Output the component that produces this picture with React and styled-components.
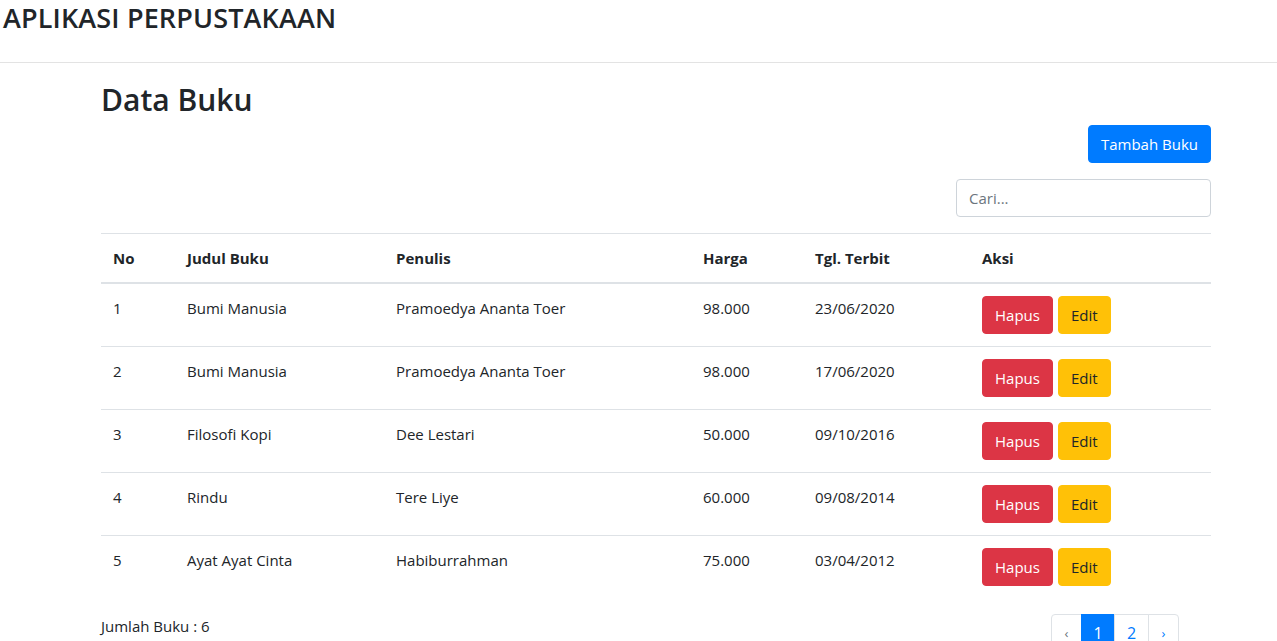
import React from 'react';
import styled, { createGlobalStyle } from 'styled-components';

const GlobalStyle = createGlobalStyle`
  * { box-sizing: border-box; }
  body {
    margin: 0;
    font-family: "Open Sans", "Noto Sans", sans-serif;
    font-size: 15px;
    color: #212529;
    background: #fff;
  }
`;

const Header = styled.div`
  height: 63px;
  border-bottom: 1px solid #e3e3e3;
  padding: 0 3px;
`;

const AppTitle = styled.h1`
  margin: 0;
  font-size: 27px;
  font-weight: 600;
  line-height: 36px;
  letter-spacing: 0.15px;
`;

const Container = styled.div`
  width: 1110px;
  margin-left: 101px;
`;

const PageTitle = styled.h2`
  margin: 18px 0 0 0;
  font-size: 30px;
  font-weight: 600;
  line-height: 38px;
`;

const Toolbar = styled.div`
  display: flex;
  flex-direction: column;
  align-items: flex-end;
  gap: 16px;
  margin-top: 6px;
`;

const Button = styled.button`
  font-family: inherit;
  font-size: 15px;
  line-height: 24px;
  height: 38px;
  padding: 6px 12px;
  border: 1px solid ${p => p.bg};
  border-radius: 4px;
  background: ${p => p.bg};
  color: ${p => p.fg};
  cursor: pointer;
`;

const SearchInput = styled.input`
  width: 255px;
  height: 38px;
  padding: 6px 12px;
  font-family: inherit;
  font-size: 15px;
  border: 1px solid #ced4da;
  border-radius: 4px;
  color: #495057;
  &::placeholder { color: #6c757d; }
`;

const Table = styled.table`
  width: 100%;
  margin-top: 16px;
  border-collapse: collapse;
`;

const Th = styled.th`
  text-align: left;
  font-weight: 700;
  padding: 12px;
  height: 49px;
  border-top: 1px solid #dee2e6;
  border-bottom: 2px solid #dee2e6;
  width: ${p => p.w}px;
`;

const Td = styled.td`
  padding: 12px;
  height: 63px;
  line-height: 24px;
  vertical-align: top;
  border-top: 1px solid #dee2e6;
`;

const Actions = styled.div`
  display: flex;
  gap: 5px;
`;

const Footer = styled.div`
  display: flex;
  justify-content: space-between;
  align-items: flex-start;
  margin-top: 16px;
  padding-right: 32px;
`;

const Count = styled.div`
  padding-top: 2px;
`;

const Pager = styled.ul`
  display: flex;
  list-style: none;
  margin: 0;
  padding: 0;
`;

const PageLink = styled.li`
  height: 38px;
  min-width: ${p => p.w}px;
  display: flex;
  align-items: center;
  justify-content: center;
  font-size: ${p => (p.arrow ? 13 : 16)}px;
  color: ${p => (p.active ? '#fff' : p.arrow && p.left ? '#6c757d' : '#007bff')};
  background: ${p => (p.active ? '#007bff' : '#fff')};
  border: 1px solid ${p => (p.active ? '#007bff' : '#dee2e6')};
  margin-left: -1px;
  &:first-child { border-radius: 4px 0 0 4px; margin-left: 0; }
  &:last-child { border-radius: 0 4px 4px 0; }
`;

const books = [
  ['Bumi Manusia', 'Pramoedya Ananta Toer', '98.000', '23/06/2020'],
  ['Bumi Manusia', 'Pramoedya Ananta Toer', '98.000', '17/06/2020'],
  ['Filosofi Kopi', 'Dee Lestari', '50.000', '09/10/2016'],
  ['Rindu', 'Tere Liye', '60.000', '09/08/2014'],
  ['Ayat Ayat Cinta', 'Habiburrahman', '75.000', '03/04/2012'],
];

export default function App() {
  return (
    <>
      <GlobalStyle />
      <Header>
        <AppTitle>APLIKASI PERPUSTAKAAN</AppTitle>
      </Header>
      <Container>
        <PageTitle>Data Buku</PageTitle>
        <Toolbar>
          <Button bg="#007bff" fg="#fff">Tambah Buku</Button>
          <SearchInput placeholder="Cari..." />
        </Toolbar>
        <Table>
          <thead>
            <tr>
              <Th w={74}>No</Th>
              <Th w={209}>Judul Buku</Th>
              <Th w={307}>Penulis</Th>
              <Th w={112}>Harga</Th>
              <Th w={167}>Tgl. Terbit</Th>
              <Th>Aksi</Th>
            </tr>
          </thead>
          <tbody>
            {books.map((b, i) => (
              <tr key={i}>
                <Td>{i + 1}</Td>
                <Td>{b[0]}</Td>
                <Td>{b[1]}</Td>
                <Td>{b[2]}</Td>
                <Td>{b[3]}</Td>
                <Td>
                  <Actions>
                    <Button bg="#dc3545" fg="#fff">Hapus</Button>
                    <Button bg="#ffc107" fg="#212529">Edit</Button>
                  </Actions>
                </Td>
              </tr>
            ))}
          </tbody>
        </Table>
        <Footer>
          <Count>Jumlah Buku : 6</Count>
          <Pager>
            <PageLink w={31} arrow left>‹</PageLink>
            <PageLink w={34} active>1</PageLink>
            <PageLink w={35}>2</PageLink>
            <PageLink w={31} arrow>›</PageLink>
          </Pager>
        </Footer>
      </Container>
    </>
  );
}
